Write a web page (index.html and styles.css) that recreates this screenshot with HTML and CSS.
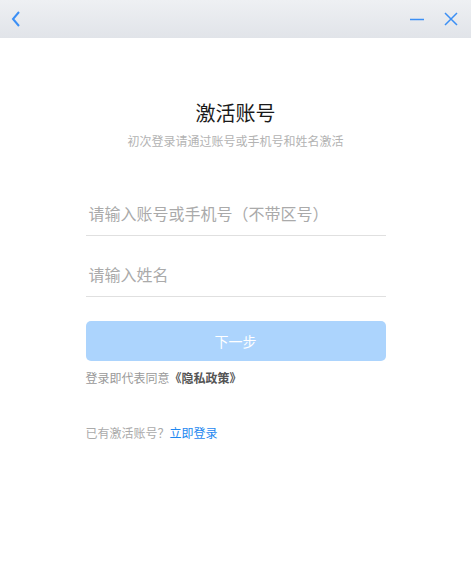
FILE: index.html
```html
<!DOCTYPE html>
<html lang="zh">
<head>
<meta charset="utf-8">
<link rel="stylesheet" href="styles.css">
</head>
<body>
<div class="titlebar">
  <svg class="icon back" width="14" height="16" viewBox="0 0 14 16"><path d="M9 1 L3 8 L9 15" fill="none" stroke="#3b8ff5" stroke-width="2"/></svg>
  <div class="spacer"></div>
  <svg class="icon min" width="16" height="16" viewBox="0 0 16 16"><path d="M1 8.5 H15" fill="none" stroke="#3b8ff5" stroke-width="1.5"/></svg>
  <svg class="icon close" width="16" height="16" viewBox="0 0 16 16"><path d="M2 2 L14 14 M14 2 L2 14" fill="none" stroke="#3b8ff5" stroke-width="1.5"/></svg>
</div>
<main class="content">
  <h1 class="title">激活账号</h1>
  <p class="subtitle">初次登录请通过账号或手机号和姓名激活</p>
  <div class="form">
    <div class="field">请输入账号或手机号（不带区号）</div>
    <div class="field">请输入姓名</div>
    <button class="next">下一步</button>
    <p class="policy">登录即代表同意<b>《隐私政策》</b></p>
    <p class="login">已有激活账号？<a>立即登录</a></p>
  </div>
</main>
</body>
</html>
```
FILE: styles.css
```css
* { box-sizing: border-box; }
html, body { margin: 0; padding: 0; background: #fff; }
body {
  font-family: "Noto Sans CJK SC", "Microsoft YaHei", sans-serif;
  width: 471px; height: 588px; overflow: hidden;
}
.titlebar {
  height: 38px;
  background: linear-gradient(#eef0f3, #e1e4e9);
  display: flex;
  align-items: center;
  padding: 0 12px 0 10px;
}
.spacer { flex: 1; }
.icon { display: block; }
.min { margin-right: 18px; }
.content {
  display: flex;
  flex-direction: column;
  align-items: center;
}
.title {
  margin: 61px 0 0;
  font-size: 20px;
  font-weight: 400;
  color: #1a1a1a;
  line-height: 28px;
}
.subtitle {
  margin: 4px 0 0;
  font-size: 12px;
  color: #b3b3b3;
  line-height: 20px;
}
.form {
  width: 300px;
  margin-top: 24px;
  display: flex;
  flex-direction: column;
}
.field {
  height: 61px;
  padding-top: 26px;
  font-size: 16px;
  line-height: 24px;
  color: #aaa;
  padding-left: 3px;
  border-bottom: 1px solid #e0e0e0;
}
.next {
  margin-top: 24px;
  height: 40px;
  border: 0;
  border-radius: 5px;
  background: #acd4fd;
  color: #fff;
  font-family: inherit;
  font-size: 14px;
  padding: 0;
}
.policy {
  margin: 8px 0 0;
  font-size: 12px;
  line-height: 18px;
  color: #999;
}
.policy b { color: #555; font-weight: 700; }
.login {
  margin: 37px 0 0;
  font-size: 12px;
  line-height: 18px;
  color: #aaa;
}
.login a { color: #1e88f0; }
```
